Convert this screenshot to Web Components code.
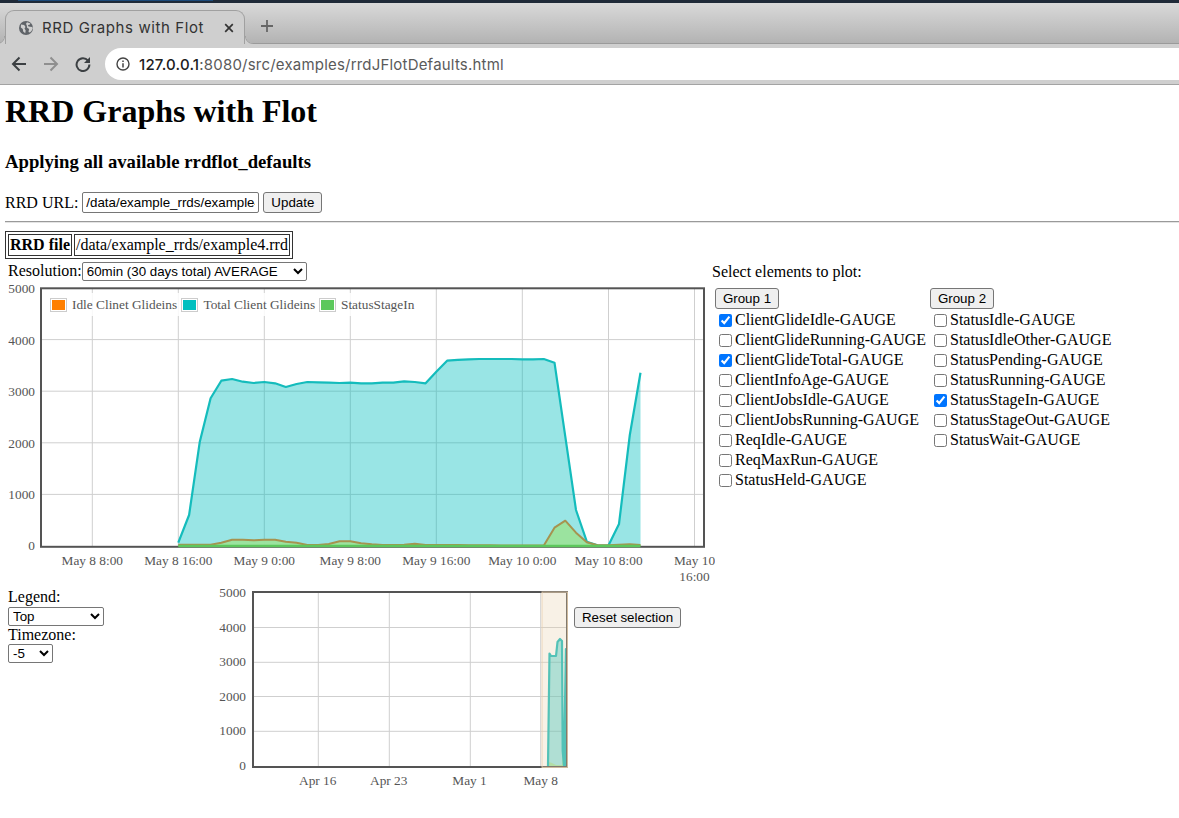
<!DOCTYPE html>
<html>
<head>
<meta charset="utf-8">
<title>RRD Graphs with Flot</title>
<style>
    html, body { margin: 0; padding: 0; background: white; overflow: hidden; }
    body { font-family: "Liberation Serif", serif; font-size: 16px; color: black; }
</style>
</head>
<body>

<browser-chrome title-text="RRD Graphs with Flot" host="127.0.0.1" rest=":8080/src/examples/rrdJFlotDefaults.html"></browser-chrome>

<rrd-page>
    <rrd-heading title-text="RRD Graphs with Flot" sub-text="Applying all available rrdflot_defaults"></rrd-heading>
    <rrd-url-form value="/data/example_rrds/example4.rrd"></rrd-url-form>
    <rrd-file-info file="/data/example_rrds/example4.rrd"></rrd-file-info>
    <rrd-main-row>
        <resolution-select slot="left"></resolution-select>
        <flot-main slot="left"></flot-main>
        <element-picker slot="right"></element-picker>
    </rrd-main-row>
    <rrd-bottom-row>
        <rrd-options slot="options"></rrd-options>
        <flot-overview slot="chart"></flot-overview>
        <button-reset slot="button"></button-reset>
    </rrd-bottom-row>
</rrd-page>

<template id="BrowserChrome">
    <style>
        :host { display: block; height: 85px; font-family: "Inter", "Noto Sans", sans-serif; box-sizing: border-box; background: #cfcfcf; border-bottom: 1px solid #a3a3a3; }
        .top { height: 3px; background: #1f2a38; }
        .top div { width: 195px; height: 1px; margin-left: 18px; background: #1c4a7a; }
        .strip { height: 41px; display: flex; align-items: flex-end; padding-left: 5px; background: linear-gradient(#d9d9d9, #b3b3b3); border-bottom: 1px solid #9a9a9a; box-sizing: border-box; }
        .tab { position: relative; width: 240px; height: 34px; box-sizing: border-box; background: #cfcfcf; border: 1px solid #a0a0a0; border-bottom: 0; border-radius: 9px 9px 0 0; display: flex; align-items: center; padding-left: 12px; color: #333; font-size: 15px; margin-bottom: -1px; }
        .tab::before, .tab::after { content: ""; position: absolute; bottom: 0; width: 8px; height: 8px; }
        .tab::before { left: -9px; background: radial-gradient(circle at 0 0, transparent 7px, #a0a0a0 7.5px, #cfcfcf 8.5px); }
        .tab::after { right: -9px; background: radial-gradient(circle at 100% 0, transparent 7px, #a0a0a0 7.5px, #cfcfcf 8.5px); }
        .tab span { margin-left: 8px; width: 182px; white-space: nowrap; letter-spacing: 0.6px; }
        .plus { margin: 0 0 0 16px; height: 34px; display: flex; align-items: center; }
        .bar { height: 40px; display: flex; align-items: center; padding-left: 11px; }
        .bar svg { flex: none; }
        .url { margin-left: 14px; height: 32px; flex: 1; background: white; border-radius: 16px 0 0 16px; display: flex; align-items: center; padding-left: 11px; font-size: 15px; letter-spacing: 0.2px; color: #5a5a5a; white-space: nowrap; }
        .url b { font-weight: 500; color: #202020; }
        .url svg { margin-right: 9px; }
    </style>
    <div class="top"><div></div></div>
    <div class="strip">
        <div class="tab">
            <svg width="16" height="16" viewBox="0 0 16 16"><circle cx="8" cy="8" r="7" fill="#5f6368"/><path d="M3 4.5l3.2.6 1.3 1.8-1 1.7 1.2 2-.5 2.6-2-1.6-.4-2.6-2-1.6zM9 2.2l3.5 1.3-1 1.2-1.6.3.6 1.4 3.6.5.8 1-1.4 3.2-1.6 1.5-1.4-.5.6-3-2-1.3-.3-2.2L8 3.8z" fill="#cfcfcf"/></svg>
            <span id="title"></span>
            <svg width="10" height="10" viewBox="0 0 10 10"><path d="M1.2 1.2l7.6 7.6M8.8 1.2l-7.6 7.6" stroke="#333" stroke-width="1.7"/></svg>
        </div>
        <div class="plus"><svg width="12" height="12" viewBox="0 0 12 12"><path d="M6 0v12M0 6h12" stroke="#666" stroke-width="1.8"/></svg></div>
    </div>
    <div class="bar">
        <svg width="16" height="16" viewBox="0 0 16 16"><path d="M15 8H2.5M8.5 1.5L2 8l6.5 6.5" fill="none" stroke="#3c4043" stroke-width="2"/></svg>
        <svg width="16" height="16" viewBox="0 0 16 16" style="margin-left:16px"><path d="M1 8h12.5M7.5 1.5L14 8l-6.5 6.5" fill="none" stroke="#8f8f8f" stroke-width="2"/></svg>
        <svg width="16" height="16" viewBox="0 0 16 16" style="margin-left:16px"><path d="M13 4.6A6.4 6.4 0 1 0 14.4 8.6" fill="none" stroke="#3c4043" stroke-width="2"/><path d="M15 1v6H9z" fill="#3c4043"/></svg>
        <div class="url">
            <svg width="14" height="14" viewBox="0 0 14 14"><circle cx="7" cy="7" r="6" fill="none" stroke="#444" stroke-width="1.4"/><path d="M7 6.2v4.2M7 3.4v1.6" stroke="#444" stroke-width="1.5"/></svg>
            <div><b id="host"></b><span id="rest"></span></div>
        </div>
    </div>
</template>

<template id="RrdPage">
    <style>
        :host { display: block; padding: 0 0 0 5px; }
    </style>
    <slot></slot>
</template>

<template id="RrdHeading">
    <style>
        :host { display: block; }
        h1 { margin: 0; padding-top: 8px; font-size: 32px; line-height: 37px; font-weight: bold; }
        h3 { margin: 21px 0 0; font-size: 18.72px; line-height: 22px; font-weight: bold; }
    </style>
    <h1 id="t"></h1>
    <h3 id="s"></h3>
</template>

<template id="RrdUrlForm">
    <style>
        :host { display: block; margin-top: 19px; }
        .row { display: flex; align-items: center; height: 21px; }
        input { width: 177px; height: 21px; box-sizing: border-box; margin: 0 0 0 4px; padding: 1px 3px; font: 13.33px "Liberation Sans", sans-serif; border: 1px solid #767676; border-radius: 2px; }
        button { margin-left: 4px; width: 59px; height: 21px; padding: 0; font: 13.33px "Liberation Sans", sans-serif; background: #efefef; border: 1px solid #767676; border-radius: 3px; color: black; }
        hr { margin: 8px -5px 0 0; border: 0; border-top: 1px solid #9a9a9a; border-bottom: 1px solid #e4e4e4; }
    </style>
    <div class="row"><label>RRD URL:</label><input id="url"><button>Update</button></div>
    <hr>
</template>

<template id="RrdFileInfo">
    <style>
        :host { display: block; margin-top: 8px; }
        table { border: 1px solid #333; border-spacing: 2px; height: 27px; }
        td, th { border: 1px solid #333; padding: 1px; font-size: 16px; line-height: 18px; }
    </style>
    <table><tr><th>RRD file</th><td id="f"></td></tr></table>
</template>

<template id="RrdMainRow">
    <style>
        :host { display: grid; grid-template-columns: 707px 1fr; margin-top: 3px; }
        .left { padding-left: 3px; }
    </style>
    <div class="left"><slot name="left"></slot></div>
    <div><slot name="right"></slot></div>
</template>

<template id="ResolutionSelect">
    <style>
        :host { display: flex; align-items: flex-start; height: 20px; }
        span { line-height: 18px; }
        select { width: 225px; height: 19px; font: 13.33px "Liberation Sans", sans-serif; background: white; color: black; border: 1px solid #767676; border-radius: 2px; margin: 0; }
    </style>
    <span>Resolution:</span>
    <select><option>60min (30 days total) AVERAGE</option></select>
</template>

<template id="ElementPicker">
    <style>
        :host { display: block; padding-top: 1px; }
        .groups { display: grid; grid-template-columns: 215px 215px; margin: 7px 0 0 3px; }
        .head { line-height: 18px; }
    </style>
    <div class="head">Select elements to plot:</div>
    <div class="groups">
        <element-group name="Group 1" items="ClientGlideIdle-GAUGE*,ClientGlideRunning-GAUGE,ClientGlideTotal-GAUGE*,ClientInfoAge-GAUGE,ClientJobsIdle-GAUGE,ClientJobsRunning-GAUGE,ReqIdle-GAUGE,ReqMaxRun-GAUGE,StatusHeld-GAUGE"></element-group>
        <element-group name="Group 2" items="StatusIdle-GAUGE,StatusIdleOther-GAUGE,StatusPending-GAUGE,StatusRunning-GAUGE,StatusStageIn-GAUGE*,StatusStageOut-GAUGE,StatusWait-GAUGE"></element-group>
    </div>
</template>

<template id="ElementGroup">
    <style>
        :host { display: block; }
        button { display: block; width: 64px; height: 21px; padding: 0; margin-bottom: 1px; font: 13.33px "Liberation Sans", sans-serif; background: #efefef; border: 1px solid #767676; border-radius: 3px; color: black; }
        label { display: flex; align-items: center; height: 20px; white-space: nowrap; }
        input { width: 13px; height: 13px; margin: 0 3px 0 4px; }
    </style>
    <button id="b"></button>
    <div id="list"></div>
</template>

<template id="RrdBottomRow">
    <style>
        :host { display: flex; align-items: flex-start; padding-left: 3px; }
        .o { width: 203px; padding-top: 3px; }
        .b { padding-top: 22px; margin-left: 3px; }
    </style>
    <div class="o"><slot name="options"></slot></div>
    <slot name="chart"></slot>
    <div class="b"><slot name="button"></slot></div>
</template>

<template id="RrdOptions">
    <style>
        :host { display: block; line-height: 18px; }
        select { display: block; height: 19px; font: 13.33px "Liberation Sans", sans-serif; background: white; color: black; border: 1px solid #767676; border-radius: 2px; margin: 0; }
        .l { width: 96px; margin-top: 1px; }
        .z { width: 45px; }
    </style>
    <div>Legend:</div>
    <select class="l"><option>Top</option><option>Bottom</option><option>None</option></select>
    <div>Timezone:</div>
    <select class="z"><option>-5</option></select>
</template>

<template id="ButtonReset">
    <style>
        :host { display: block; }
        button { width: 107px; height: 21px; padding: 0; font: 13.33px "Liberation Sans", sans-serif; background: #efefef; border: 1px solid #767676; border-radius: 3px; color: black; }
    </style>
    <button>Reset selection</button>
</template>

<script>
    function stamp(el, id) {
        el.attachShadow({ mode: 'open' });
        el.shadowRoot.appendChild(document.querySelector('#' + id).content.cloneNode(true));
        return el.shadowRoot;
    }

    class BrowserChrome extends HTMLElement {
        constructor() {
            super();
            const r = stamp(this, 'BrowserChrome');
            r.querySelector('#title').textContent = this.getAttribute('title-text');
            r.querySelector('#host').textContent = this.getAttribute('host');
            r.querySelector('#rest').textContent = this.getAttribute('rest');
        }
    }

    class RrdPage extends HTMLElement {
        constructor() { super(); stamp(this, 'RrdPage'); }
    }

    class RrdHeading extends HTMLElement {
        constructor() {
            super();
            const r = stamp(this, 'RrdHeading');
            r.querySelector('#t').textContent = this.getAttribute('title-text');
            r.querySelector('#s').textContent = this.getAttribute('sub-text');
        }
    }

    class RrdUrlForm extends HTMLElement {
        constructor() {
            super();
            stamp(this, 'RrdUrlForm').querySelector('#url').value = this.getAttribute('value');
        }
    }

    class RrdFileInfo extends HTMLElement {
        constructor() {
            super();
            stamp(this, 'RrdFileInfo').querySelector('#f').textContent = this.getAttribute('file');
        }
    }

    class RrdMainRow extends HTMLElement {
        constructor() { super(); stamp(this, 'RrdMainRow'); }
    }
    class ResolutionSelect extends HTMLElement {
        constructor() { super(); stamp(this, 'ResolutionSelect'); }
    }
    class ElementPicker extends HTMLElement {
        constructor() { super(); stamp(this, 'ElementPicker'); }
    }

    class ElementGroup extends HTMLElement {
        constructor() {
            super();
            const r = stamp(this, 'ElementGroup');
            r.querySelector('#b').textContent = this.getAttribute('name');
            const list = r.querySelector('#list');
            this.getAttribute('items').split(',').forEach(item => {
                const on = item.endsWith('*');
                const label = document.createElement('label');
                const box = document.createElement('input');
                box.type = 'checkbox';
                box.checked = on;
                label.appendChild(box);
                label.appendChild(document.createTextNode(on ? item.slice(0, -1) : item));
                list.appendChild(label);
            });
        }
    }

    class RrdBottomRow extends HTMLElement {
        constructor() { super(); stamp(this, 'RrdBottomRow'); }
    }
    class RrdOptions extends HTMLElement {
        constructor() { super(); stamp(this, 'RrdOptions'); }
    }
    class ButtonReset extends HTMLElement {
        constructor() { super(); stamp(this, 'ButtonReset'); }
    }

    // hourly values read off the graph, first point is May 8 16:00
    const TOTAL = [64,601,2021,2862,3203,3236,3184,3159,3178,3153,3081,3140,3178,3172,3165,3159,3165,3153,3153,3165,3165,3192,3178,3153,3378,3591,3609,3618,3624,3624,3624,3624,3618,3618,3624,3552,2118,698,83,14,6,426,2151,3358];
    const STAGE = [25,25,25,25,64,122,122,110,122,122,83,64,19,19,39,91,91,52,33,19,19,25,45,19,19,19,17,15,14,13,12,12,12,12,12,355,490,258,72,14,14,25,33,19];

    const TICK = 'font-family="Liberation Serif" font-size="13.33" fill="#555"';
    const GRID = '#cfcfcf';

    function pathOf(pts) {
        return pts.map((p, i) => (i ? 'L' : 'M') + p[0].toFixed(1) + ' ' + p[1].toFixed(1)).join('');
    }

    class FlotMain extends HTMLElement {
        constructor() {
            super();
            this.attachShadow({ mode: 'open' });
            const X0 = 178.3, DX = 10.75, Y0 = 546, K = 51.6 / 1000;
            const pt = (v, i) => [X0 + i * DX, Y0 - v * K];
            const total = TOTAL.map(pt), stage = STAGE.map(pt);
            const last = X0 + (TOTAL.length - 1) * DX;
            const area = pts => pathOf(pts) + 'L' + last + ' ' + Y0 + 'L' + X0 + ' ' + Y0 + 'Z';

            let grid = '', labels = '';
            [92.3, 178.3, 264.3, 350.3, 436.3, 522.3, 608.5, 694.5].forEach(x => {
                grid += `<path d="M${x} 288V546" stroke="${GRID}"/>`;
            });
            [5000, 4000, 3000, 2000, 1000, 0].forEach(v => {
                const y = Y0 - v * K;
                if (v && v < 5000) grid += `<path d="M41 ${y}H704" stroke="${GRID}"/>`;
                labels += `<text x="35" y="${v ? y + 5 : y + 4}" text-anchor="end" ${TICK}>${v}</text>`;
            });
            [[92.3, 'May 8 8:00'], [178.3, 'May 8 16:00'], [264.3, 'May 9 0:00'], [350.3, 'May 9 8:00'], [436.3, 'May 9 16:00'], [522.3, 'May 10 0:00'], [608.5, 'May 10 8:00'], [694.5, 'May 10']].forEach(t => {
                labels += `<text x="${t[0]}" y="565" text-anchor="middle" ${TICK}>${t[1]}</text>`;
            });
            labels += `<text x="694.5" y="581" text-anchor="middle" ${TICK}>16:00</text>`;

            let legend = '<rect x="46" y="293" width="376" height="23" fill="#fff" fill-opacity=".85"/>';
            [[50.5, '#ff7f00', 'Idle Clinet Glideins', 72], [181.5, '#00bfbf', 'Total Client Glideins', 203.5], [319.5, '#5cc85c', 'StatusStageIn', 341]].forEach(l => {
                legend += `<rect x="${l[0]}" y="298.5" width="16" height="13" fill="#fff" stroke="#ccc"/>`
                    + `<rect x="${l[0] + 1.5}" y="300" width="13" height="10" fill="${l[1]}"/>`
                    + `<text x="${l[3]}" y="309" ${TICK}>${l[2]}</text>`;
            });

            this.shadowRoot.innerHTML = `
                <style>:host { display: block; margin-top: -6px; } svg { display: block; }</style>
                <svg width="707" height="309" viewBox="8 276 707 309">
                    ${grid}
                    <path d="${area(total)}" fill="#00bfbf" fill-opacity=".4"/>
                    <path d="${area(stage)}" fill="#9be39b" fill-opacity=".95"/>
                    <rect x="41" y="288.3" width="663" height="258.5" fill="none" stroke="#545454" stroke-width="2"/>
                    <path d="${pathOf(total)}" fill="none" stroke="#14bcbc" stroke-width="2.2" stroke-linejoin="round"/>
                    <path d="${pathOf(stage)}" fill="none" stroke="#a6934f" stroke-width="2" stroke-linejoin="round"/>
                    <path d="M178.3 546H640.5" stroke="#5cc85c" stroke-width="2.4"/>
                    ${legend}
                    ${labels}
                </svg>`;
        }
    }

    class FlotOverview extends HTMLElement {
        constructor() {
            super();
            this.attachShadow({ mode: 'open' });
            let grid = '', labels = '';
            [318.3, 389.3, 470.3, 540.7].forEach(x => {
                grid += `<path d="M${x} 592V767" stroke="${GRID}"/>`;
            });
            [[5000, 592.5], [4000, 627.5], [3000, 662.3], [2000, 696.5], [1000, 731.3], [0, 766]].forEach(t => {
                if (t[0] && t[0] < 5000) grid += `<path d="M253 ${t[1]}H567" stroke="${GRID}"/>`;
                labels += `<text x="246" y="${t[1] + 4}" text-anchor="end" ${TICK}>${t[0]}</text>`;
            });
            [[317.7, 'Apr 16'], [388.7, 'Apr 23'], [469.5, 'May 1'], [540.7, 'May 8']].forEach(t => {
                labels += `<text x="${t[0]}" y="785" text-anchor="middle" ${TICK}>${t[1]}</text>`;
            });
            const line = 'M548 766L549.5 653.5L551 656L556 656L557.5 642L560 639L562 641L562.7 751L564 766L565.9 649L566 766';
            this.shadowRoot.innerHTML = `
                <style>:host { display: block; } svg { display: block; }</style>
                <svg width="360" height="205" viewBox="211 585 360 205">
                    ${grid}
                    <path d="${line}Z" fill="#00bfbf" fill-opacity=".4"/>
                    <path d="M548 766L549 762L552 763L556 765L562 765L562.5 752L564 766Z" fill="#9be39b" fill-opacity=".9"/>
                    <path d="${line}" fill="none" stroke="#14bcbc" stroke-width="2.2" stroke-linejoin="round"/>
                    <rect x="253" y="592" width="314" height="175" fill="none" stroke="#545454" stroke-width="2"/>
                    <rect x="542" y="592" width="25.5" height="175.5" fill="#e8cfac" fill-opacity=".3" stroke="#e8cfac" stroke-opacity=".8"/>
                    ${labels}
                </svg>`;
        }
    }

    window.customElements.define('browser-chrome', BrowserChrome);
    window.customElements.define('rrd-page', RrdPage);
    window.customElements.define('rrd-heading', RrdHeading);
    window.customElements.define('rrd-url-form', RrdUrlForm);
    window.customElements.define('rrd-file-info', RrdFileInfo);
    window.customElements.define('rrd-main-row', RrdMainRow);
    window.customElements.define('resolution-select', ResolutionSelect);
    window.customElements.define('element-group', ElementGroup);
    window.customElements.define('element-picker', ElementPicker);
    window.customElements.define('rrd-bottom-row', RrdBottomRow);
    window.customElements.define('rrd-options', RrdOptions);
    window.customElements.define('button-reset', ButtonReset);
    window.customElements.define('flot-main', FlotMain);
    window.customElements.define('flot-overview', FlotOverview);
</script>
</body>
</html>
